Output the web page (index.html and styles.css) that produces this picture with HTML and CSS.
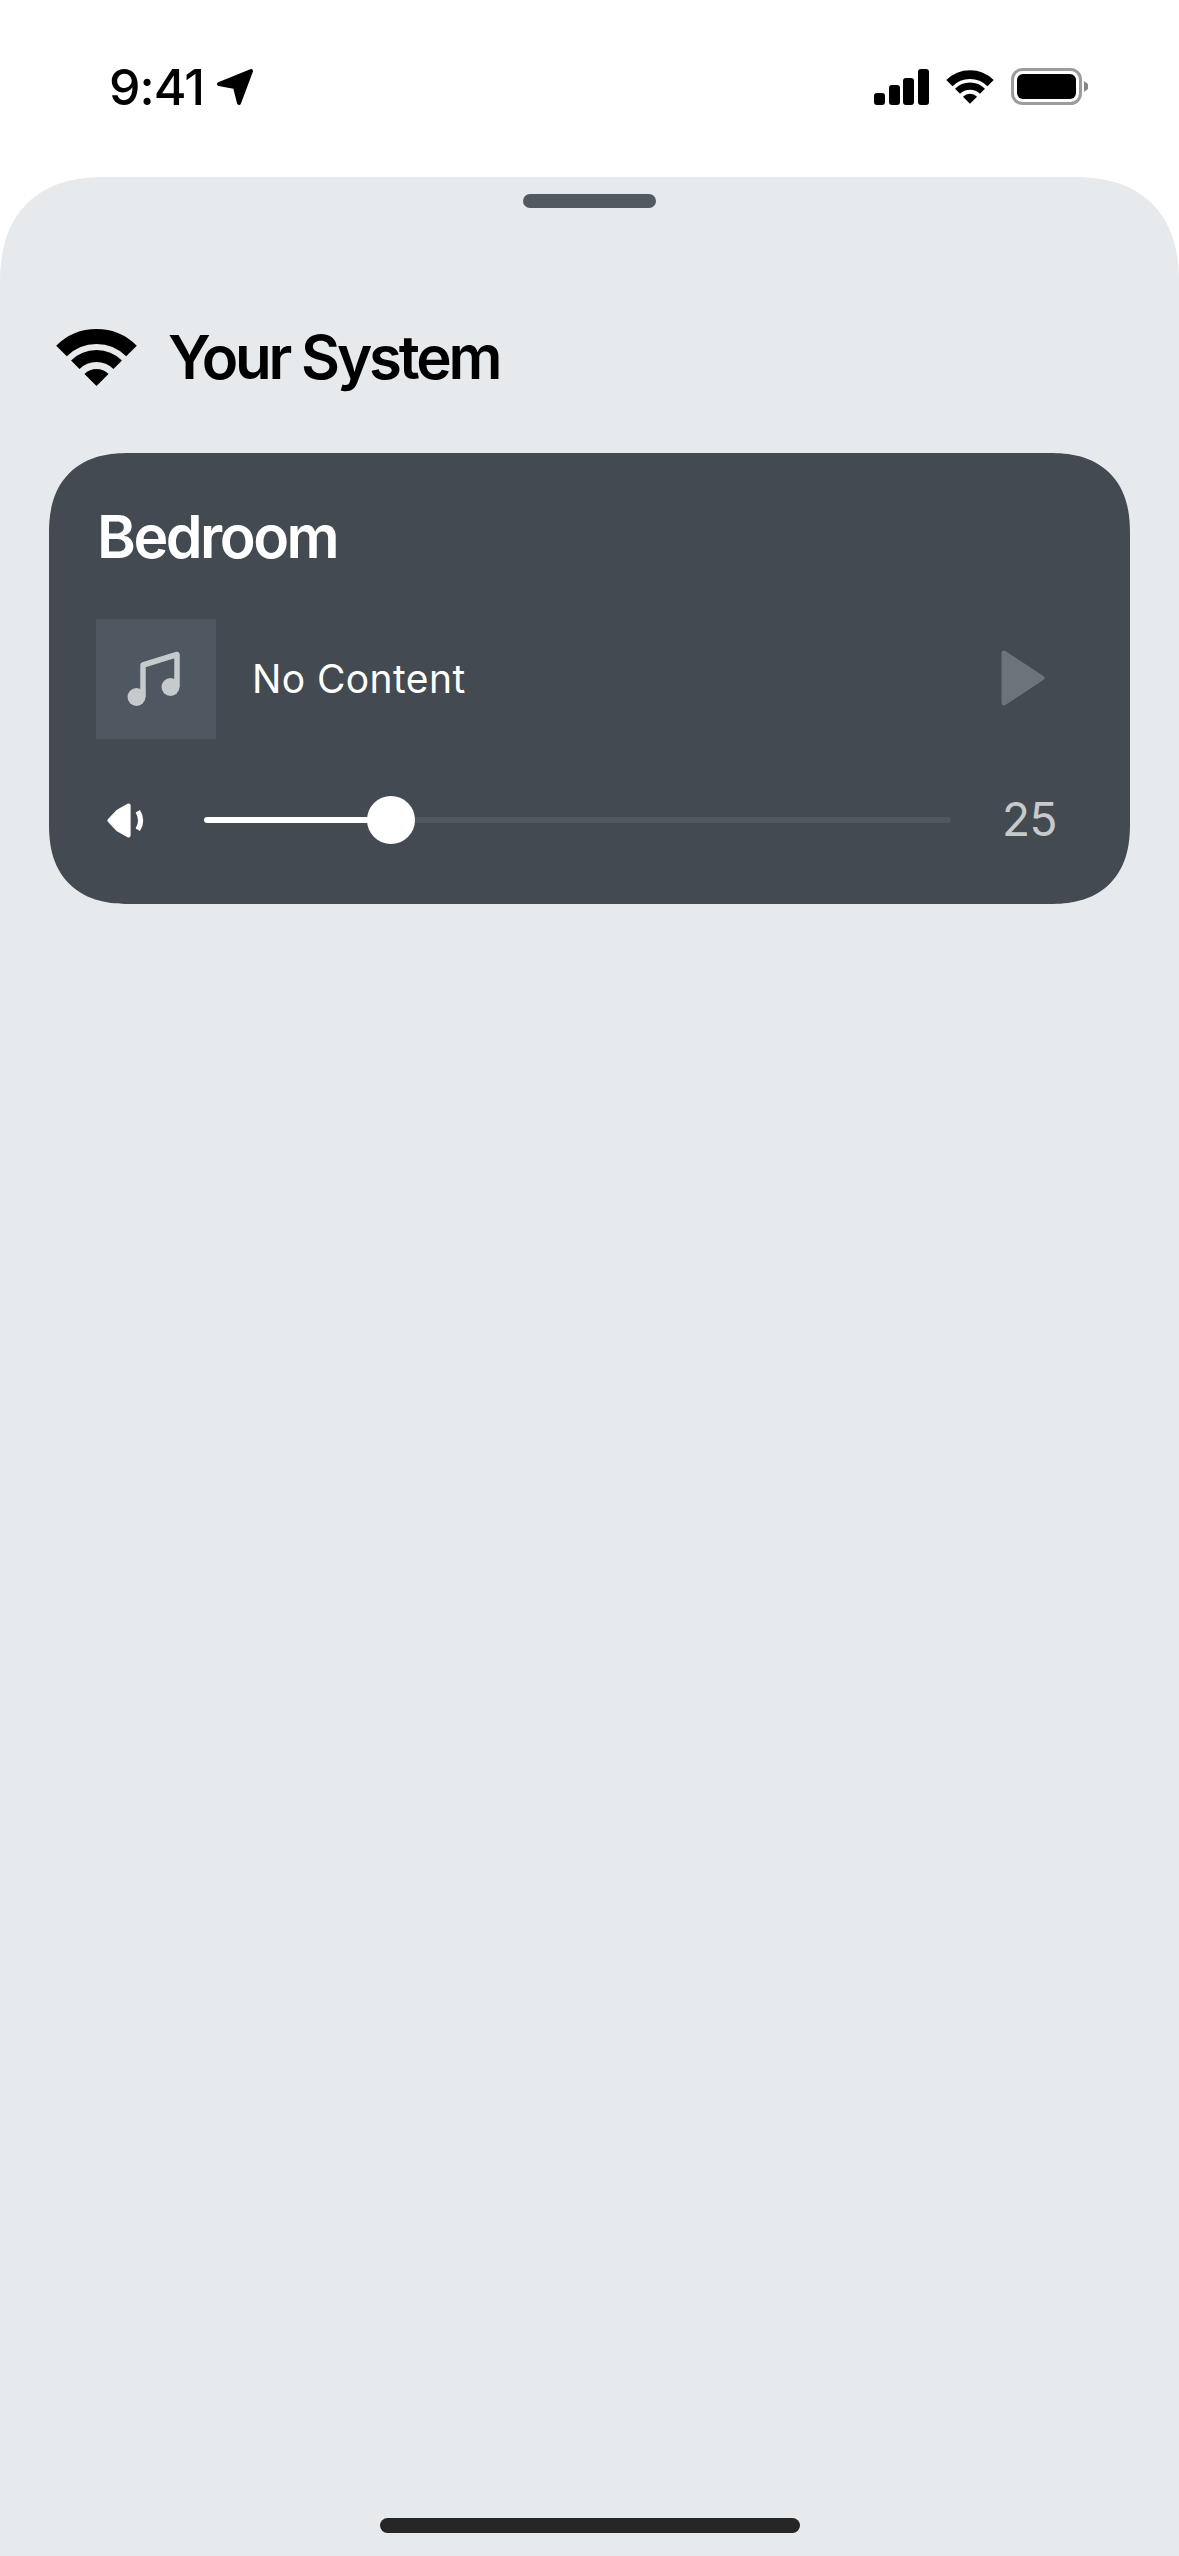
FILE: index.html
```html
<!DOCTYPE html>
<html lang="en">
<head>
    <meta charset="UTF-8">
    <meta name="viewport" content="width=device-width, initial-scale=1.0">
    <title>Your System</title>
    <link rel="stylesheet" href="styles.css">
</head>
<body>
    <div class="status-bar">
        <div class="status-left">
            <span class="clock">9:41</span>
            <svg class="arrow-icon" viewBox="0 0 38 38"><path d="M3 16 L35 3 L23 35 L19 19 Z" fill="#000" stroke="#000" stroke-width="4" stroke-linejoin="round"/></svg>
        </div>
        <div class="status-right">
            <svg class="signal-icon" viewBox="0 0 55 36">
                <rect x="0" y="24" width="11" height="12" rx="3"/>
                <rect x="15" y="16" width="11" height="20" rx="3"/>
                <rect x="29" y="9" width="11" height="27" rx="3"/>
                <rect x="44" y="0" width="11" height="36" rx="3"/>
            </svg>
            <svg class="wifi-small" viewBox="0 0 85 57">
                <path d="M7.5 22 A49.5 49.5 0 0 1 77.5 22" fill="none" stroke="#000" stroke-width="15"/>
                <path d="M21.3 35.8 A30 30 0 0 1 63.7 35.8" fill="none" stroke="#000" stroke-width="12"/>
                <path d="M42.5 57 L30.5 45 A17 17 0 0 1 54.5 45 Z"/>
            </svg>
            <svg class="battery-icon" viewBox="0 0 78 37">
                <rect x="1.5" y="1.5" width="68" height="34" rx="10" fill="none" stroke="#9a9da0" stroke-width="3"/>
                <rect x="6" y="6" width="59" height="25" rx="6"/>
                <path d="M73 13 L77 16 L77 21 L73 24 Z" fill="#85898d"/>
            </svg>
        </div>
    </div>

    <div class="sheet">
        <div class="handle"></div>

        <header class="sheet-header">
            <svg class="wifi-big" viewBox="0 0 85 57">
                <path d="M7.5 22 A49.5 49.5 0 0 1 77.5 22" fill="none" stroke="#000" stroke-width="15"/>
                <path d="M21.3 35.8 A30 30 0 0 1 63.7 35.8" fill="none" stroke="#000" stroke-width="12"/>
                <path d="M42.5 57 L30.5 45 A17 17 0 0 1 54.5 45 Z"/>
            </svg>
            <h1>Your System</h1>
        </header>

        <section class="room-card">
            <h2>Bedroom</h2>
            <div class="now-playing">
                <div class="art">
                    <svg class="note-icon" viewBox="1.5 0 54 54">
                        <circle cx="9" cy="45" r="9"/>
                        <circle cx="43" cy="35" r="9"/>
                        <path d="M15.5 45 V13 L49.5 2.500 V35" fill="none" stroke-width="5.500" stroke-linejoin="round"/>
                    </svg>
                </div>
                <span class="track">No Content</span>
                <svg class="play-icon" viewBox="0 0 44 56"><path d="M3 3 L41 28 L3 53 Z" fill="#6c747b" stroke="#6c747b" stroke-width="5" stroke-linejoin="round"/></svg>
            </div>
            <div class="volume">
                <svg class="speaker-icon" viewBox="0 0 37 34">
                    <path d="M2.500 17 L11 8 L21 2.500 V31.500 L11 26 Z" fill="#fff" stroke="#fff" stroke-width="4" stroke-linejoin="round"/>
                    <path d="M30 8 Q35.500 17 30 26" fill="none" stroke="#fff" stroke-width="5"/>
                </svg>
                <div class="slider">
                    <div class="slider-fill" style="width: 25%"></div>
                    <div class="slider-knob"></div>
                </div>
                <span class="level">25</span>
            </div>
        </section>

        <div class="home-bar"></div>
    </div>
</body>
</html>
```

FILE: styles.css
```css
* {
    box-sizing: border-box;
    margin: 0;
    padding: 0;
}

html, body {
    height: 100%;
}

body {
    display: flex;
    flex-direction: column;
    background: white;
    font-family: Inter, 'Liberation Sans', sans-serif;
    overflow: hidden;
}

.status-bar {
    height: 177px;
    flex-shrink: 0;
    display: flex;
    justify-content: space-between;
    align-items: flex-start;
    padding: 68px 90px 0 109px;
}

.status-left {
    display: flex;
    align-items: center;
    gap: 12px;
    height: 37px;
}

.clock {
    font-size: 50px;
    font-weight: 500;
    letter-spacing: -1px;
    color: #000;
}

.arrow-icon {
    width: 38px;
    height: 38px;
}

.status-right {
    display: flex;
    align-items: center;
    gap: 16px;
}

.signal-icon {
    width: 55px;
    height: 36px;
}

.wifi-small {
    width: 50px;
    height: 36px;
}

.battery-icon {
    width: 78px;
    height: 37px;
}

.sheet {
    flex: 1;
    position: relative;
    display: flex;
    flex-direction: column;
    background: #e6eaed;
    border-radius: 106px 106px 0 0;
    corner-shape: superellipse(1.25);
    padding: 17px 49px 23px;
}

.handle {
    width: 133px;
    height: 14px;
    margin: 0 auto;
    background: #515961;
    border-radius: 7px;
}

.sheet-header {
    display: flex;
    align-items: center;
    gap: 29px;
    margin: 117px 0 64px 5px;
    height: 64px;
}

.wifi-big {
    width: 85px;
    height: 57px;
}

h1 {
    font-size: 60px;
    font-weight: 600;
    letter-spacing: -3.200px;
    color: #000;
}

.room-card {
    height: 451px;
    padding: 49px 49px 0 47px;
    background: #434a51;
    border-radius: 80px;
    corner-shape: superellipse(1.25);
    color: white;
}

.room-card h2 {
    font-size: 59px;
    line-height: 70px;
    font-weight: 600;
    letter-spacing: -2.500px;
    margin-left: 1px;
}

.now-playing {
    display: flex;
    align-items: center;
    margin-top: 47px;
}

.art {
    width: 120px;
    height: 120px;
    background: #4f5761;
    display: flex;
    align-items: center;
    justify-content: center;
}

.note-icon {
    width: 54px;
    height: 54px;
    overflow: visible;
    fill: #c6cacd;
    stroke: #c6cacd;
}

.note-icon circle {
    stroke: none;
}

.track {
    flex: 1;
    margin: -2px 0 0 36px;
    font-size: 39px;
    letter-spacing: 0.400px;
}

.play-icon {
    width: 44px;
    height: 56px;
    margin-right: 36px;
    position: relative;
    top: -1px;
}

.volume {
    display: flex;
    align-items: center;
    margin-top: 51px;
    height: 60px;
}

.speaker-icon {
    width: 38px;
    height: 35px;
    margin-left: 11px;
}

.slider {
    position: relative;
    width: 747px;
    height: 6px;
    margin-left: 59px;
    background: #4f5761;
    border-radius: 3px;
}

.slider-fill {
    height: 100%;
    background: white;
    border-radius: 3px;
}

.slider-knob {
    position: absolute;
    left: 163px;
    top: -21px;
    width: 48px;
    height: 48px;
    background: white;
    border-radius: 50%;
}

.level {
    margin: -2px 0 0 51px;
    font-size: 46px;
    letter-spacing: -0.500px;
    color: #c6cacd;
}

.home-bar {
    width: 420px;
    height: 15px;
    margin: auto auto 0;
    background: #262626;
    border-radius: 8px;
}
```
